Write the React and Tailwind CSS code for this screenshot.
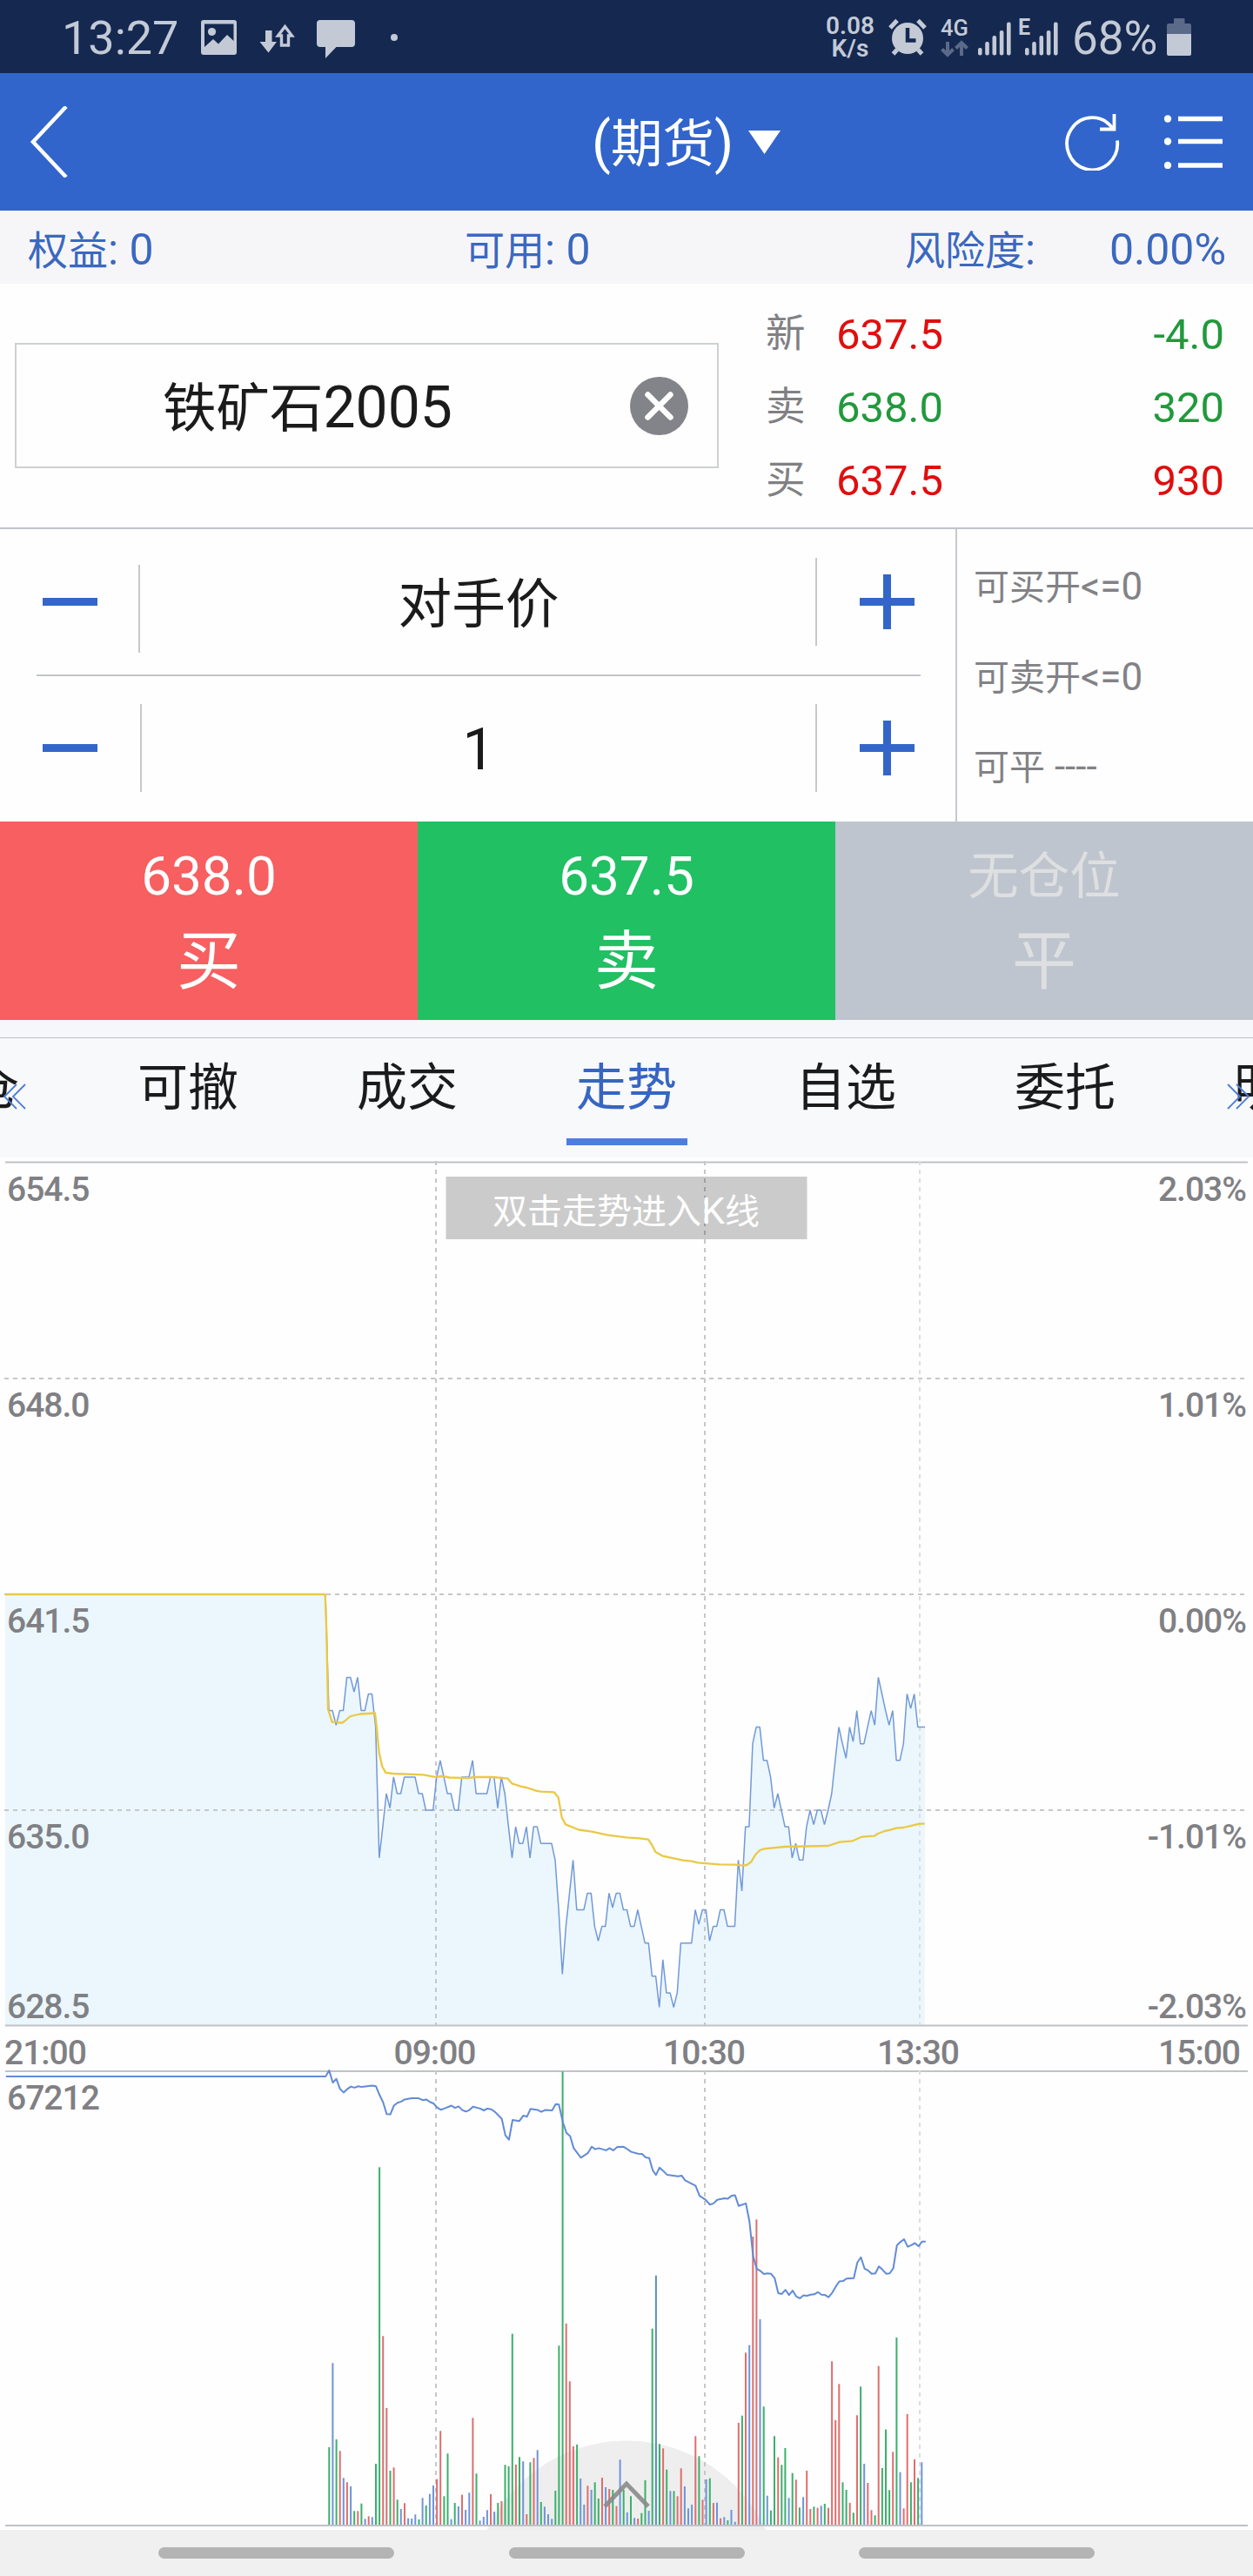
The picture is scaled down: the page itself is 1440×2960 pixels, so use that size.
const MINUTE = 4.127;
const FIRST_X = 378;
const BASE_Y = 1832;
const TICK_Y = 19.08;

// Ticks below the previous settlement price, one entry per minute.
const PRICE_TICKS = [
  7, 7, 8, 7, 7, 5, 5, 6, 5, 7, 7, 6, 6, 8, 16, 14, 12, 13, 11, 12, 12, 11, 11, 11, 11, 12, 12, 13, 13, 13,
  11, 10, 11, 12, 12, 13, 13, 11, 11, 11, 10, 12, 12, 12, 12, 11, 11, 13, 11, 12, 14, 16, 14, 15, 15, 14, 16, 14, 14, 15,
  15, 15, 15, 16, 19, 23, 20, 18, 16, 19, 19, 19, 18, 18, 20, 21, 20, 20, 18, 19, 18, 18, 19, 19, 20, 20, 19, 20, 21, 21,
  23, 23, 25, 22, 24, 24, 25, 24, 21, 21, 21, 21, 19, 20, 19, 19, 21, 20, 20, 19, 19, 20, 20, 20, 16, 18, 14, 14, 9, 8,
  8, 10, 10, 11, 13, 12, 13, 14, 14, 16, 15, 16, 16, 14, 13, 14, 13, 13, 14, 13, 12, 10, 8, 9, 10, 8, 9, 7, 9, 9,
  8, 7, 8, 5, 6, 7, 8, 7, 10, 10, 9, 6, 7, 6, 8, 8, 8,
];

const AVERAGE =
  "6,1832 373.7,1832 375.3,1876 377,1964 381.7,1979 386,1978 389,1979.5 393.5,1979.5 397,1977 402,1972.5 407,1971 414,1969.5 431,1968.5 433,1986 435.7,2014 439.3,2030 443.3,2036.8 451.7,2038 486.7,2039.3 500,2041.8 508,2041 516.7,2042.5 538.3,2043.2 545,2042 566.7,2042 583.3,2043.6 588.3,2049.3 600,2053.2 605,2054 616.7,2057.9 621.7,2058.6 636.7,2059.3 641.7,2065.4 645.7,2088.6 650,2096.4 665,2102.5 680,2104.6 698.3,2108.6 720,2111.4 735,2112.3 745,2113.7 749.3,2120 753.3,2128 761.7,2132.7 785,2137.7 795,2138.7 801.7,2140.3 826.7,2142.3 845,2142.7 853.3,2143.7 858.3,2143 863.3,2139.3 868.3,2131 873.3,2126 878.3,2124.3 901.7,2122 951.7,2121 965,2116.7 980,2115.3 990,2110.7 1005,2109.7 1008.3,2107.3 1016.7,2104 1023.3,2102.7 1030,2100.7 1038.3,2100 1048.3,2097.7 1056.7,2095.7 1062.7,2095.7";

const OPEN_INTEREST = [
  [15, 204], [815, 204], [824, 188], [833, 221], [842, 211], [851, 238], [860, 248], [869, 239], [878, 232], [887, 235],
  [897, 231], [905, 233], [932, 229], [941, 231], [950, 255], [959, 275], [968, 307], [977, 308], [986, 284], [995, 276],
  [1004, 273], [1013, 267], [1030, 264], [1048, 264], [1058, 269], [1067, 267], [1076, 274], [1085, 278], [1094, 289], [1103, 295],
  [1112, 292], [1130, 284], [1139, 290], [1148, 286], [1157, 296], [1166, 300], [1175, 296], [1184, 287], [1202, 292], [1211, 297],
  [1220, 292], [1230, 294], [1240, 302], [1256, 320], [1265, 365], [1274, 377], [1283, 323], [1300, 326], [1310, 311], [1319, 314],
  [1328, 293], [1346, 296], [1355, 301], [1364, 296], [1382, 297], [1391, 280], [1399, 281], [1409, 330], [1418, 359], [1427, 367],
  [1436, 400], [1454, 426], [1472, 413], [1481, 396], [1490, 403], [1499, 400], [1517, 406], [1526, 400], [1535, 406], [1545, 397],
  [1560, 396], [1568, 401], [1580, 410], [1597, 415], [1607, 416], [1616, 425], [1625, 427], [1634, 461], [1642, 473], [1651, 453],
  [1661, 463], [1670, 473], [1697, 477], [1706, 475], [1715, 488], [1741, 503], [1751, 530], [1766, 541], [1777, 554], [1786, 551],
  [1795, 541], [1813, 537], [1822, 538], [1831, 530], [1840, 529], [1849, 558], [1867, 551], [1876, 600], [1885, 695], [1894, 729],
  [1903, 735], [1912, 744], [1921, 742], [1930, 743], [1939, 755], [1948, 796], [1957, 798], [1966, 787], [1975, 801], [1984, 789],
  [1993, 805], [2002, 810], [2011, 802], [2020, 803], [2029, 800], [2038, 799], [2047, 793], [2056, 800], [2065, 801], [2074, 807],
  [2083, 795], [2092, 778], [2101, 764], [2110, 763], [2119, 756], [2137, 755], [2146, 712], [2155, 698], [2164, 729], [2173, 734],
  [2182, 743], [2191, 742], [2200, 723], [2209, 732], [2218, 743], [2227, 742], [2236, 728], [2245, 665], [2254, 656], [2263, 649],
  [2272, 669], [2281, 665], [2290, 659], [2299, 668], [2308, 655], [2317, 655],
];

// Colour letter plus the top of each minute's bar, in thirds of a pixel.
const VOLUME =
  "g636 b346 g609 r649 b742 r757 b771 g856 r856 g830 b883 r874 b877 g693 g-329 r253 r501 g717 r706 g817 b849 r829 b881 b882 b868 g885 b811 g837 b797 b768 r746 r580 g805 g658 b884 g828 b840 r800 b852 b793 r535 g727 b889 b876 b853 r798 b858 g828 r822 g697 g702 g245 r696 g670 b685 r867 g688 r673 b646 g825 b841 b867 b883 g786 g286 g-659 r210 r409 r633 g627 b744 b834 r769 b783 g757 g813 r741 b774 r780 g783 r839 b679 g783 b861 g805 b880 r882 g863 g750 b855 g227 t44 g625 r640 g713 b787 g787 r805 r709 b771 b847 b834 r598 g667 r817 b747 g743 r828 b827 r881 b877 g888 b852 b893 r552 g527 r310 b284 r-90 r-149 b195 g496 b803 g854 g598 r671 g697 g639 b811 g725 r748 g844 b808 r717 r849 g841 r845 b838 g831 r845 r340 r543 r418 g757 g783 r828 g862 r526 g427 b693 r759 r853 g871 r356 g708 g575 g784 r652 g258 b722 r847 r522 g757 r678 g742 b688"
    .split(" ");

const BAR_COLORS = { g: "#3bb06c", r: "#df6e6e", b: "#6f94d8", t: "#5b90bb" };

// A one-minute low is drawn with a slightly blunted tip.
const blunted = (t, i) => (t > PRICE_TICKS[i - 1] && t > PRICE_TICKS[i + 1] ? t - 0.13 : t);

const pricePoints = PRICE_TICKS.map(
  (t, i) => `${(FIRST_X + i * MINUTE).toFixed(1)},${(BASE_Y + blunted(t, i) * TICK_Y).toFixed(1)}`
).join(" ");
const interestPoints = OPEN_INTEREST.map(
  ([x, y]) => `${(x / 2.178).toFixed(1)},${(2300 + y / 2.376).toFixed(1)}`
).join(" ");

function SignalBars() {
  return (
    <svg width="38" height="40" viewBox="0 0 38 40" fill="#c3cad6">
      <rect x="0" y="31" width="4.6" height="8.5" rx="2" />
      <rect x="8.2" y="24" width="4.6" height="15.5" rx="2" />
      <rect x="16.5" y="17" width="4.6" height="22.5" rx="2" />
      <rect x="24.8" y="11" width="4.6" height="28.5" rx="2" />
      <rect x="33" y="1.5" width="4.6" height="38" rx="2" />
    </svg>
  );
}

function StatusBar() {
  return (
    <div className="flex h-[84px] items-start bg-[#152850] text-[#c3cad6]">
      <span className="mt-[17px] ml-[71px] w-[160px] text-[54px] leading-[54px]">13:27</span>
      <svg className="mt-[23px]" width="41" height="40" viewBox="0 0 41 40">
        <path
          fill="#c3cad6"
          fillRule="evenodd"
          d="M3 0h35a3 3 0 0 1 3 3v34a3 3 0 0 1-3 3H3a3 3 0 0 1-3-3V3a3 3 0 0 1 3-3ZM4 4.500V31l10-9 6 5.500 10-10.500 7.500 7V4.500Z"
        />
        <circle cx="12.500" cy="13.500" r="4.600" fill="#c3cad6" />
      </svg>
      <svg className="mt-[27px] ml-[26px]" width="41" height="34" viewBox="0 0 41 34">
        <path fill="#c3cad6" d="M7 8h7.500v13H20L10.500 33.500 0.500 21H7Z" />
        <path fill="none" stroke="#c3cad6" strokeWidth="3.400" d="M25.500 25V14h-4L29.500 3.500 37.500 14H33.500v11Z" />
      </svg>
      <svg className="mt-[23px] ml-[25px]" width="44" height="45" viewBox="0 0 44 45">
        <path fill="#c3cad6" d="M4 0h36a4 4 0 0 1 4 4v23a4 4 0 0 1-4 4H22.500L10 44V31H4a4 4 0 0 1-4-4V4a4 4 0 0 1 4-4Z" />
      </svg>
      <span className="mt-[39px] ml-[41px] size-2 rounded-full bg-[#c3cad6]" />
      <div className="mt-[17px] ml-auto flex w-[58px] flex-col items-center text-[28px] leading-[26px] font-semibold">
        <span>0.08</span>
        <span>K/s</span>
      </div>
      <svg className="mt-[21px] ml-[15px]" width="44" height="43" viewBox="0 0 44 43">
        <circle cx="22" cy="23" r="18" fill="#c3cad6" />
        <path stroke="#c3cad6" strokeWidth="5" d="M2 11 10 2.500M42 11 34 2.500M5.500 41 10 36M38.500 41 34 36" />
        <path fill="none" stroke="#152850" strokeWidth="4.500" d="M22 11v14.500h9.500" />
      </svg>
      <div className="mt-[19px] ml-[15px] flex w-[34px] flex-col items-center">
        <span className="text-[25.500px] leading-[26px] font-medium">4G</span>
        <svg className="mt-px" width="32" height="20" viewBox="0 0 32 20" fill="none" stroke="#5b6a88" strokeWidth="4">
          <path d="M8 2v15M1.500 10.500 8 17l6.500-6.500M24 18V3M17.500 9.500 24 3l6.500 6.500" />
        </svg>
      </div>
      <div className="mt-6 ml-[10px]">
        <SignalBars />
      </div>
      <span className="-mr-[8px] mt-[19px] ml-[8px] text-[25px] leading-[26px] font-bold">E</span>
      <div className="mt-6 ml-[2px]">
        <SignalBars />
      </div>
      <span className="mt-[17px] ml-[16px] w-[109px] text-[53px] leading-[54px]">68%</span>
      <svg className="mt-[21px] mr-[71px]" width="28" height="43" viewBox="0 0 28 43">
        <path fill="#5b6a88" d="M8 1a1 1 0 0 1 1-1h10.500a1 1 0 0 1 1 1v5H26a2 2 0 0 1 2 2v10H0V8a2 2 0 0 1 2-2h6Z" />
        <path fill="#c3cad6" d="M0 18h28v23a2 2 0 0 1-2 2H2a2 2 0 0 1-2-2Z" />
      </svg>
    </div>
  );
}

function Header() {
  return (
    <div className="flex h-[158px] items-center bg-[#3165cc] text-white">
      <svg className="ml-[34px]" width="44" height="82" viewBox="0 0 44 82" fill="none" stroke="white" strokeWidth="4.500">
        <path d="M42 0.500 4 41 42 81.500" />
      </svg>
      <span className="mt-[4px] ml-[602px] w-[164px] text-[64px] leading-none whitespace-nowrap">
        (<span className="text-[59.500px]">期货</span>)
      </span>
      <svg className="ml-[16px]" width="37" height="27" viewBox="0 0 37 27">
        <path fill="white" d="M0 0h37L18.500 27Z" />
      </svg>
      <svg className="ml-auto" width="64" height="66" viewBox="0 0 64 66" fill="none" stroke="white" strokeWidth="3.800">
        <path d="M61 31.500A29 30 0 1 1 56 18" />
        <path d="M57.500 1v17.500H41" />
      </svg>
      <svg className="mr-[35px] ml-[51px]" width="67" height="62" viewBox="0 0 67 62" fill="white">
        <circle cx="4" cy="4.500" r="4.200" />
        <circle cx="4" cy="30.500" r="4.200" />
        <circle cx="4" cy="58" r="4.200" />
        <path stroke="white" strokeWidth="5.500" d="M16 4.500h51M16 30.500h51M16 58h51" />
      </svg>
    </div>
  );
}

function AccountBar() {
  return (
    <div className="flex h-[84px] items-center bg-[#f6f6f9] pt-[5px] pr-[31px] pl-8 text-[50px] leading-none whitespace-nowrap text-[#3b68bf]">
      <span className="w-[502px]">
        <span className="text-[46px]">权益</span>: 0
      </span>
      <span className="w-[506px]">
        <span className="text-[46px]">可用</span>: 0
      </span>
      <span>
        <span className="text-[46px]">风险度</span>:
      </span>
      <span className="ml-auto">0.00%</span>
    </div>
  );
}

const QUOTES = [
  { label: "新", price: "637.5", size: "-4.0", priceColor: "text-[#e00e0e]", sizeColor: "text-[#21993c]" },
  { label: "卖", price: "638.0", size: "320", priceColor: "text-[#21993c]", sizeColor: "text-[#21993c]" },
  { label: "买", price: "637.5", size: "930", priceColor: "text-[#e00e0e]", sizeColor: "text-[#e00e0e]" },
];

function Instrument() {
  return (
    <div className="flex h-[280px]">
      <div className="mt-[68px] ml-[17px] flex h-[144px] w-[809px] items-center border-2 border-[#cdd0d4] pr-[33px] pl-[168px]">
        <span className="mt-[5px] text-[66px] leading-none whitespace-nowrap text-[#1b1b1c]">
          <span className="text-[61.500px]">铁矿石</span>2005
        </span>
        <svg className="ml-auto" width="67" height="67" viewBox="0 0 67 67">
          <circle cx="33.500" cy="33.500" r="33.500" fill="#83838a" />
          <path stroke="white" strokeWidth="6.500" strokeLinecap="round" d="M20.500 20.500 46.500 46.500M46.500 20.500 20.500 46.500" />
        </svg>
      </div>
      <div className="ml-[54px] flex-1 pt-4 pr-[33px]">
        {QUOTES.map((q) => (
          <div key={q.label} className="flex h-[84px] items-center text-[49px] leading-none">
            <span className="w-[81px] text-[45.500px] text-[#808084]">{q.label}</span>
            <span className={q.priceColor}>{q.price}</span>
            <span className={`ml-auto ${q.sizeColor}`}>{q.size}</span>
          </div>
        ))}
      </div>
    </div>
  );
}

function Minus() {
  return <span className="h-[9px] w-[63px] bg-[#3366c8]" />;
}

function Plus() {
  return (
    <svg width="63" height="63" viewBox="0 0 63 63" fill="#3366c8">
      <path d="M27 0h9v27h27v9H36v27h-9V36H0v-9h27Z" />
    </svg>
  );
}

function OrderEntry() {
  return (
    <div className="flex h-[338px] border-t-2 border-[#bfc4ca] whitespace-nowrap">
      <div className="w-[1098px]">
        <div className="flex h-[167px] items-center pr-[47px] pl-[49px]">
          <Minus />
          <span className="mt-[15px] ml-[47px] h-[101px] w-[2px] bg-[#c5c8cc]" />
          <span className="mt-[8px] flex-1 pl-[2px] text-center text-[61.700px] leading-none text-[#1b1b1c]">对手价</span>
          <span className="mr-[49px] h-[101px] w-[2px] bg-[#c5c8cc]" />
          <Plus />
        </div>
        <div className="ml-[42px] h-[2px] w-[1016px] bg-[#c1c5ca]" />
        <div className="flex h-[165px] items-center pr-[47px] pl-[49px]">
          <Minus />
          <span className="ml-[49px] h-[101px] w-[2px] bg-[#c5c8cc]" />
          <span className="mt-[4px] flex-1 text-center text-[66px] leading-none text-[#1b1b1c]">1</span>
          <span className="mr-[49px] h-[101px] w-[2px] bg-[#c5c8cc]" />
          <Plus />
        </div>
      </div>
      <div className="flex-1 border-l-2 border-[#c5c9cf] pt-[15px] pl-[19px] text-[44px] leading-[103.500px] text-[#828286]">
        <div className="h-[103.500px]">
          <span className="text-[41px]">可买开</span>&lt;=0
        </div>
        <div className="h-[103.500px]">
          <span className="text-[41px]">可卖开</span>&lt;=0
        </div>
        <div className="h-[103.500px]">
          <span className="text-[41px]">可平</span> ----
        </div>
      </div>
    </div>
  );
}

function TradeButtons() {
  return (
    <div className="grid h-[228px] grid-cols-3 text-center text-white">
      <button className="flex flex-col items-center bg-[#f75f60] pt-[32px]">
        <span className="text-[62px] leading-[62px]">638.0</span>
        <span className="mt-[30px] text-[74px] leading-[74px]">买</span>
      </button>
      <button className="flex flex-col items-center bg-[#20c063] pt-[32px]">
        <span className="text-[62px] leading-[62px]">637.5</span>
        <span className="mt-[30px] text-[74px] leading-[74px]">卖</span>
      </button>
      <button className="flex flex-col items-center bg-[#bfc5ce] pt-[32px] text-[#dedfe1]">
        <span className="text-[58.500px] leading-[62px]">无仓位</span>
        <span className="mt-[30px] text-[74px] leading-[74px]">平</span>
      </button>
    </div>
  );
}

const TABS = ["持仓", "可撤", "成交", "走势", "自选", "委托", "明细"];

function Tabs() {
  return (
    <div className="relative h-[158px] overflow-hidden bg-[#f6f7fa] pt-5">
      <div className="flex h-[138px] border-t border-[#bcc0c6] bg-[#f7f9fb]">
        <div className="-ml-[162px] flex shrink-0">
          {TABS.map((tab) => (
            <div key={tab} className="flex w-[252px] flex-col items-center pt-[28px]">
              <span className={`text-[58px] leading-[58px] ${tab === "走势" ? "text-[#3765c1]" : "text-[#1b1b1c]"}`}>{tab}</span>
              {tab === "走势" && <span className="mt-[29px] h-2 w-[139px] bg-[#4e7de2]" />}
            </div>
          ))}
        </div>
      </div>
      <svg className="absolute top-[73px] left-[3px]" width="28" height="30" viewBox="0 0 28 30" fill="none" stroke="#4d7bd6" strokeWidth="1.800">
        <path d="M16 1 2 15 16 29M26 1 12 15 26 29" />
      </svg>
      <svg className="absolute top-[73px] right-[3px]" width="28" height="30" viewBox="0 0 28 30" fill="none" stroke="#4d7bd6" strokeWidth="1.800">
        <path d="M2 1 16 15 2 29M12 1 26 15 12 29" />
      </svg>
    </div>
  );
}

const LEVELS = [
  { y: 1380, left: "654.5", right: "2.03%" },
  { y: 1628, left: "648.0", right: "1.01%" },
  { y: 1876, left: "641.5", right: "0.00%" },
  { y: 2124, left: "635.0", right: "-1.01%" },
  { y: 2319, left: "628.5", right: "-2.03%" },
];

function TrendChart() {
  return (
    <svg className="block" width="1440" height="1577" viewBox="0 1330 1440 1577">
      <rect x="0" y="1330" width="1440" height="1577" fill="#fefefe" />
      <polygon points={`6,2327 6,1832 374,1832 ${pricePoints} 1062.700,2327`} fill="#ebf7fd" />
      <circle cx="720" cy="2981" r="176.500" fill="#eeeeee" />

      <g stroke="#bfc2c6" strokeWidth="2">
        <path d="M6 1335.500H1434M6 2327.500H1434M6 2380H1434M6 2902H1434" />
      </g>
      <g stroke="#c5c7ca" strokeWidth="2" strokeDasharray="5 5">
        <path d="M5 1584H1434M5 1832H1434M5 2080H1434" />
        <path d="M501 1334V2327M810 1334V2327M501 2379V2901M810 2379V2901" />
        <path d="M1057 1334V2327M1057 2379V2901" stroke="#dcdee0" />
      </g>

      <polyline points={`374,1832 ${pricePoints}`} fill="none" stroke="#7299d8" strokeWidth="1.500" strokeLinejoin="bevel" />
      <polyline points={AVERAGE} fill="none" stroke="#eac945" strokeWidth="2.300" strokeLinejoin="round" />

      {VOLUME.map((bar, i) => {
        const top = 2600 + Number(bar.slice(1)) / 3;
        return (
          <rect
            key={i}
            x={(377.300 + i * MINUTE).toFixed(1)}
            y={top.toFixed(1)}
            width="2"
            height={(2901 - top).toFixed(1)}
            fill={BAR_COLORS[bar[0]]}
          />
        );
      })}
      <polyline points={interestPoints} fill="none" stroke="#618bd6" strokeWidth="2" strokeLinejoin="round" />
      <path d="M695 2880 720 2854 745 2880" fill="none" stroke="#8a8a8a" strokeOpacity="0.9" strokeWidth="5" />

      <rect x="512.500" y="1352" width="415" height="72" fill="#000000" fillOpacity="0.2" />
      <text x="566" y="1406" fontSize="43" fill="white">
        <tspan fontSize="40">双击走势进入</tspan>K<tspan fontSize="40">线</tspan>
      </text>

      <g fontSize="39" fontWeight="500" letterSpacing="-1" fill="#808084">
        {LEVELS.map((l) => (
          <g key={l.y}>
            <text x="8" y={l.y}>{l.left}</text>
            <text x="1432" y={l.y} textAnchor="end">{l.right}</text>
          </g>
        ))}
        <text x="5" y="2371.500">21:00</text>
        <text x="499.500" y="2371.500" textAnchor="middle">09:00</text>
        <text x="809" y="2371.500" textAnchor="middle">10:30</text>
        <text x="1055" y="2371.500" textAnchor="middle">13:30</text>
        <text x="1425" y="2371.500" textAnchor="end">15:00</text>
        <text x="8" y="2424">67212</text>
      </g>
    </svg>
  );
}

function NavigationBar() {
  return (
    <div className="flex h-[53px] justify-between bg-[#f0f0f0] pt-5 pr-[182px] pl-[182px]">
      <span className="h-[13px] w-[271px] rounded-full bg-[#b4b4b4]" />
      <span className="h-[13px] w-[271px] rounded-full bg-[#b4b4b4]" />
      <span className="h-[13px] w-[271px] rounded-full bg-[#b4b4b4]" />
    </div>
  );
}

export default function App() {
  return (
    <div className="h-[2960px] w-[1440px] overflow-hidden bg-[#fefefe] [font-family:Roboto,'Noto_Sans_CJK_SC',sans-serif]">
      <StatusBar />
      <Header />
      <AccountBar />
      <Instrument />
      <OrderEntry />
      <TradeButtons />
      <Tabs />
      <TrendChart />
      <NavigationBar />
    </div>
  );
}
